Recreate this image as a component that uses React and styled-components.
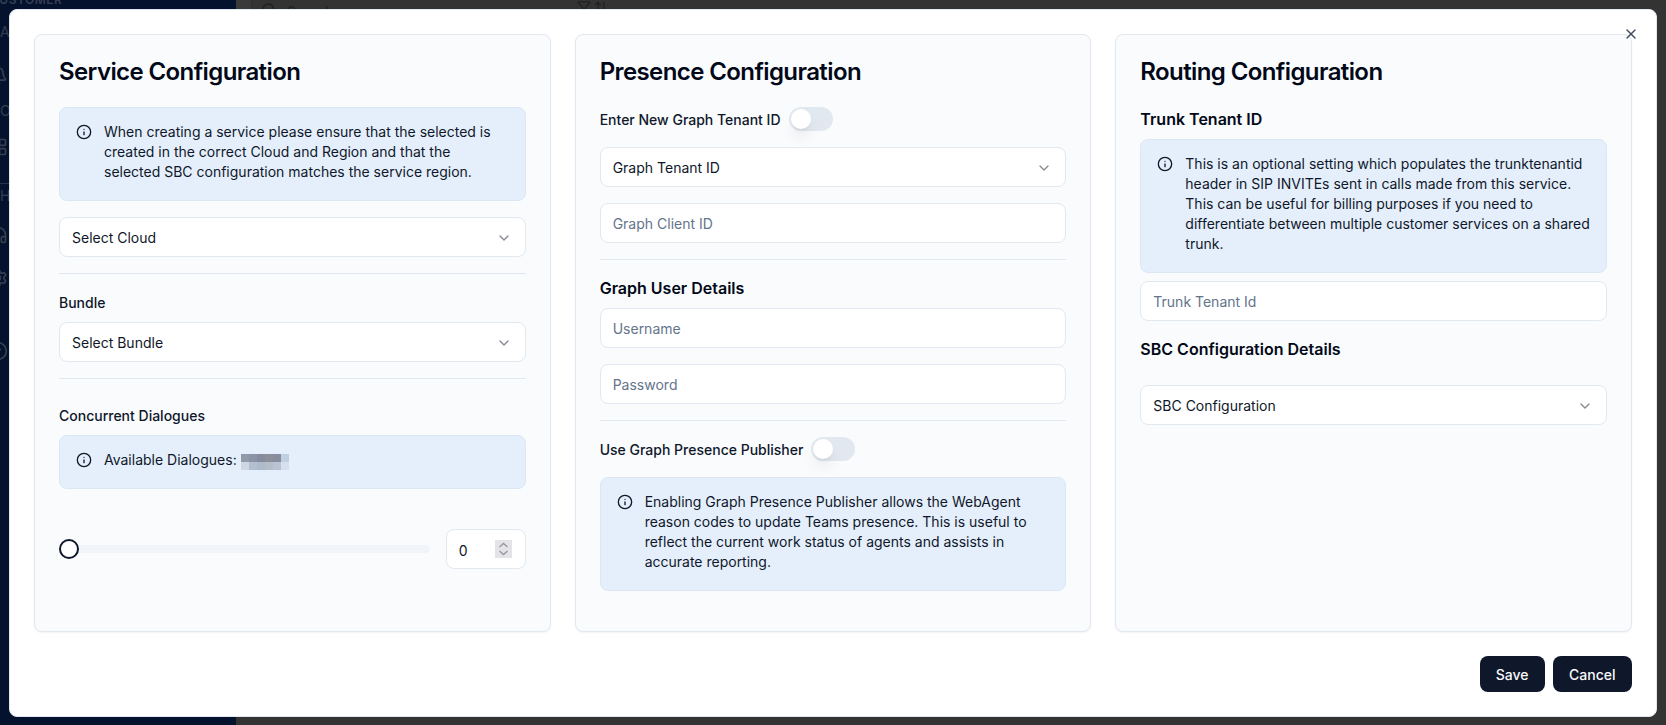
import React from 'react';
import styled, { createGlobalStyle } from 'styled-components';
import { X, Info, ChevronDown, Search, Bell, LayoutGrid, Headphones, Settings, CircleCheck, Filter, ArrowUpDown } from 'lucide-react';

const Global = createGlobalStyle`
  html, body { margin: 0; padding: 0; height: 100%; overflow: hidden; background: #333333; }
  * { box-sizing: border-box; }
  body { font-family: Inter, "Liberation Sans", sans-serif; color: #0f172a; }
`;

const Page = styled.div`
  position: relative;
  width: 1666px;
  height: 725px;
  display: flex;
  overflow: hidden;
  background: #333333;
`;

const Sidebar = styled.aside`
  width: 236px;
  height: 725px;
  background: #04122e;
  color: #363f50;
  flex: none;
  display: flex;
  flex-direction: column;
  align-items: flex-start;
  overflow: hidden;
`;

const SideHeading = styled.div`
  font-size: 12px;
  font-weight: 600;
  letter-spacing: 0.5px;
  line-height: 12px;
  margin: -6px 0 0 -10px;
  white-space: nowrap;
`;

const SideText = styled.div`
  height: 20px;
  font-size: 14px;
  line-height: 20px;
  margin-top: ${p => p.$gap}px;
  margin-left: 0;
`;

const SideIcon = styled.div`
  display: flex;
  height: 20px;
  margin-top: ${p => p.$gap}px;
  margin-left: -12px;
`;

const SideRule = styled.div`
  width: 100%;
  height: 1px;
  flex: none;
  margin-top: 26px;
  background: #2a3345;
`;

const Topbar = styled.div`
  flex: 1;
  height: 14px;
  display: flex;
  align-items: flex-start;
  color: #1f1f1f;
  font-size: 14px;
  line-height: 20px;
`;

const TopGutter = styled.div`
  width: 16px;
  height: 14px;
  flex: none;
  background: #3a3a3a;
  border-right: 1px solid #2e2e2e;
`;

const SearchField = styled.div`
  display: flex;
  align-items: flex-start;
  gap: 10px;
  padding: 2px 0 0 9px;
  width: 325px;
  flex: none;
`;

const TopTools = styled.div`
  display: flex;
  gap: 3px;
`;

const Backdrop = styled.div`
  position: absolute;
  inset: 0;
  display: flex;
  align-items: flex-start;
  justify-content: center;
  padding: 9px 9px 8px;
`;

const Modal = styled.div`
  position: relative;
  width: 1648px;
  height: 708px;
  background: #ffffff;
  border: 1px solid #e2e8f0;
  border-radius: 8px;
  padding: 24px;
  display: flex;
  flex-direction: column;
  gap: 24px;
`;

const CloseButton = styled.button`
  position: absolute;
  top: 16px;
  right: 17px;
  width: 16px;
  height: 16px;
  padding: 0;
  border: 0;
  background: transparent;
  color: #3f4a5c;
  display: flex;
  z-index: 2;
`;

const Columns = styled.div`
  display: grid;
  grid-template-columns: repeat(3, 1fr);
  gap: 24px;
  height: 598px;
`;

const Card = styled.section`
  background: #f9fbfd;
  border: 1px solid #e2e8f0;
  border-radius: 8px;
  box-shadow: 0 1px 2px rgba(0, 0, 0, 0.05);
  padding: 21px 24px 24px;
  display: flex;
  flex-direction: column;
`;

const Title = styled.h2`
  margin: 0 0 19px;
  font-size: 24px;
  line-height: 32px;
  font-weight: 600;
  letter-spacing: -0.6px;
  color: #020817;
`;

const InfoBox = styled.div`
  display: flex;
  gap: 12px;
  background: #e5effb;
  border: 1px solid #dbe7f5;
  border-radius: 8px;
  padding: 14px 16px 18px;
  font-size: 14px;
  line-height: 20px;
  color: #0f172a;
  margin-bottom: ${p => p.$after ?? 16}px;
`;

const InfoIcon = styled(Info)`
  flex: none;
  width: 16px;
  height: 16px;
  margin-top: 2px;
  color: #0f172a;
`;

const InfoText = styled.div`
  display: flex;
  align-items: center;
  flex-wrap: wrap;
`;

const Redacted = styled.svg`
  display: block;
  margin: 4px 0 0 4px;
  width: 48px;
  height: 16px;
`;

const Select = styled.div`
  height: 40px;
  flex: none;
  background: #ffffff;
  border: 1px solid #e2e8f0;
  border-radius: 8px;
  padding: 1px 13px 0 12px;
  display: flex;
  align-items: center;
  justify-content: space-between;
  font-size: 14px;
  color: #0f172a;
  margin-bottom: ${p => p.$after ?? 16}px;
`;

const Placeholder = styled(Select)`
  color: #64748b;
`;

const Chevron = styled(ChevronDown)`
  width: 16px;
  height: 16px;
  color: #0f172a;
  opacity: 0.5;
`;

const Divider = styled.hr`
  margin: 0 0 ${p => p.$after ?? 16}px;
  border: 0;
  height: 1px;
  flex: none;
  background: #e2e8f0;
`;

const FieldLabel = styled.div`
  font-size: 14px;
  line-height: 20px;
  font-weight: 500;
  color: #0f172a;
  margin-bottom: ${p => p.$after ?? 9}px;
`;

const SubHeading = styled.h3`
  margin: 0 0 ${p => p.$after ?? 8}px;
  font-size: 16px;
  line-height: 24px;
  font-weight: 600;
  color: #020817;
`;

const ToggleRow = styled.div`
  display: flex;
  align-items: center;
  gap: 8px;
  height: 24px;
  margin-bottom: 16px;
  font-size: 14px;
  font-weight: 500;
  color: #0f172a;
`;

const Toggle = styled.span`
  width: 44px;
  height: 24px;
  border-radius: 12px;
  background: #e2e8f0;
  padding: 2px;
  display: flex;
  flex: none;
`;

const Knob = styled.span`
  width: 20px;
  height: 20px;
  border-radius: 50%;
  background: #ffffff;
  box-shadow: 0 10px 15px -3px rgba(0, 0, 0, 0.1), 0 4px 6px -4px rgba(0, 0, 0, 0.1);
`;

const SliderRow = styled.div`
  display: flex;
  align-items: center;
  gap: 16px;
  margin-top: 40px;
`;

const Track = styled.div`
  position: relative;
  flex: 1;
  height: 8px;
  border-radius: 4px;
  background: #f1f5f9;
`;

const Thumb = styled.span`
  position: absolute;
  left: 0;
  top: -6px;
  width: 20px;
  height: 20px;
  border-radius: 50%;
  background: #ffffff;
  border: 2px solid #0f172a;
`;

const NumberBox = styled.div`
  width: 80px;
  height: 40px;
  flex: none;
  background: #ffffff;
  border: 1px solid #e2e8f0;
  border-radius: 8px;
  padding: 0 13px 0 12px;
  display: flex;
  align-items: center;
  justify-content: space-between;
  font-size: 14px;
  color: #0f172a;
`;

const NumberValue = styled.span`
  padding-top: 2px;
`;

const Spinner = styled.span`
  width: 17px;
  height: 18px;
  background: #e4e4e8;
  color: #9a9a9e;
  display: flex;
  align-items: center;
  justify-content: center;
`;

const Footer = styled.div`
  display: flex;
  justify-content: flex-end;
  gap: 8px;
`;

const Button = styled.button`
  height: 36px;
  padding: 0 ${p => p.$pad ?? 16}px;
  border: 0;
  border-radius: 8px;
  background: #0f172a;
  color: #f8fafc;
  font-family: inherit;
  font-size: 14px;
  font-weight: 500;
`;

const pixels = [
  ['#9299a9', '#8b93a6', '#858c9d', '#8d8f9b', '#878d9c', '#c0d0e2'],
  ['#cdd6e2', '#b3bfd0', '#aebbcb', '#b5bdca', '#bac3d3', '#d4e0ee'],
];

export default function App() {
  return (
    <Page>
      <Global />
      <Sidebar>
        <SideHeading>CUSTOMER</SideHeading>
        <SideText $gap={16}>Analytics</SideText>
        <SideIcon $gap={24}><Bell size={20} /></SideIcon>
        <SideText $gap={15}>Overview</SideText>
        <SideIcon $gap={16}><LayoutGrid size={20} /></SideIcon>
        <SideRule />
        <SideText $gap={2}>Hunt</SideText>
        <SideIcon $gap={19}><Headphones size={20} /></SideIcon>
        <SideIcon $gap={23}><Settings size={20} /></SideIcon>
        <SideIcon $gap={53}><CircleCheck size={20} /></SideIcon>
      </Sidebar>
      <Topbar>
        <TopGutter />
        <SearchField><Search size={16} /><span>Search</span></SearchField>
        <TopTools><Filter size={14} /><ArrowUpDown size={14} /></TopTools>
      </Topbar>
      <Backdrop>
        <Modal>
          <CloseButton aria-label="Close"><X size={16} /></CloseButton>
          <Columns>
            <Card>
              <Title>Service Configuration</Title>
              <InfoBox>
                <InfoIcon />
                <div>When creating a service please ensure that the selected is created in the correct Cloud and Region and that the selected SBC configuration matches the service region.</div>
              </InfoBox>
              <Select>Select Cloud<Chevron /></Select>
              <Divider $after={19} />
              <FieldLabel>Bundle</FieldLabel>
              <Select>Select Bundle<Chevron /></Select>
              <Divider $after={27} />
              <FieldLabel>Concurrent Dialogues</FieldLabel>
              <InfoBox $after={0}>
                <InfoIcon />
                <InfoText>
                  Available Dialogues:
                  <Redacted viewBox="0 0 6 2" preserveAspectRatio="none" shapeRendering="crispEdges">
                    {pixels.map((row, y) => row.map((fill, x) => (
                      <rect key={`${x}-${y}`} x={x} y={y} width="1" height="1" fill={fill} />
                    )))}
                  </Redacted>
                </InfoText>
              </InfoBox>
              <SliderRow>
                <Track><Thumb /></Track>
                <NumberBox>
                  <NumberValue>0</NumberValue>
                  <Spinner>
                    <svg width="11" height="14" viewBox="0 0 11 14" fill="none" stroke="currentColor" strokeWidth="1.4">
                      <path d="M1.5 5 5.5 1.5 9.5 5M1.5 9 5.5 12.5 9.5 9" />
                    </svg>
                  </Spinner>
                </NumberBox>
              </SliderRow>
            </Card>
            <Card>
              <Title>Presence Configuration</Title>
              <ToggleRow><span>Enter New Graph Tenant ID</span><Toggle><Knob /></Toggle></ToggleRow>
              <Select>Graph Tenant ID<Chevron /></Select>
              <Placeholder>Graph Client ID</Placeholder>
              <Divider />
              <SubHeading>Graph User Details</SubHeading>
              <Placeholder>Username</Placeholder>
              <Placeholder>Password</Placeholder>
              <Divider />
              <ToggleRow><span>Use Graph Presence Publisher</span><Toggle><Knob /></Toggle></ToggleRow>
              <InfoBox $after={0}>
                <InfoIcon />
                <div>Enabling Graph Presence Publisher allows the WebAgent reason codes to update Teams presence. This is useful to reflect the current work status of agents and assists in accurate reporting.</div>
              </InfoBox>
            </Card>
            <Card>
              <Title>Routing Configuration</Title>
              <SubHeading>Trunk Tenant ID</SubHeading>
              <InfoBox $after={8}>
                <InfoIcon />
                <div>This is an optional setting which populates the trunktenantid header in SIP INVITEs sent in calls made from this service. This can be useful for billing purposes if you need to differentiate between multiple customer services on a shared trunk.</div>
              </InfoBox>
              <Placeholder>Trunk Tenant Id</Placeholder>
              <SubHeading $after={24}>SBC Configuration Details</SubHeading>
              <Select>SBC Configuration<Chevron /></Select>
            </Card>
          </Columns>
          <Footer>
            <Button>Save</Button>
            <Button $pad={16.5}>Cancel</Button>
          </Footer>
        </Modal>
      </Backdrop>
    </Page>
  );
}
